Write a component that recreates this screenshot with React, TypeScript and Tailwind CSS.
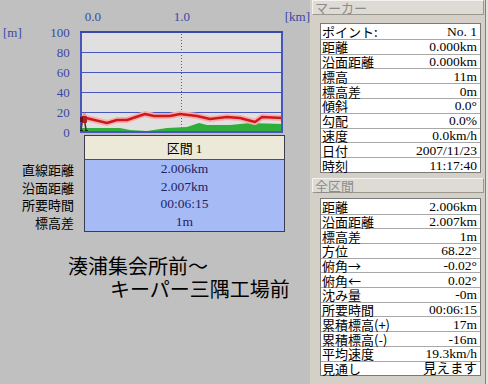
import React from "react";

const jp = "font-['Noto_Sans_CJK_JP',sans-serif]";
const serif = "font-['Liberation_Serif','Noto_Sans_CJK_JP',serif]";

const markerRows: [string, string][] = [
  ["ポイント:", "No. 1"],
  ["距離", "0.000km"],
  ["沿面距離", "0.000km"],
  ["標高", "11m"],
  ["標高差", "0m"],
  ["傾斜", "0.0°"],
  ["勾配", "0.0%"],
  ["速度", "0.0km/h"],
  ["日付", "2007/11/23"],
  ["時刻", "11:17:40"],
];

const totalRows: [string, string][] = [
  ["距離", "2.006km"],
  ["沿面距離", "2.007km"],
  ["標高差", "1m"],
  ["方位", "68.22°"],
  ["俯角→", "-0.02°"],
  ["俯角←", "0.02°"],
  ["沈み量", "-0m"],
  ["所要時間", "00:06:15"],
  ["累積標高(+)", "17m"],
  ["累積標高(-)", "-16m"],
  ["平均速度", "19.3km/h"],
  ["見通し", "見えます"],
];

const sectionRows: [string, string][] = [
  ["直線距離", "2.006km"],
  ["沿面距離", "2.007km"],
  ["所要時間", "00:06:15"],
  ["標高差", "1m"],
];

const redLine =
  "2,86 27,92 37,89 47,89 65,83 74,85 90,85 100,83 117,85 130,88 147,86 160,87 175,91 182,86 202,87";
const greenArea =
  "2,101 2,97 27,97 40,97 50,99 67,100 87,97 107,96 119,92 127,94 150,94 170,92 202,93 202,101";

const Chart = () => (
  <svg width="203" height="102" viewBox="0 0 203 102" className="block">
    <rect x="0" y="0" width="203" height="102" fill="#e0e0e0" />
    {[21, 41, 61, 81].map((y) => (
      <line key={y} x1="0" x2="203" y1={y + 0.5} y2={y + 0.5} stroke="#4656bc" strokeWidth="1" />
    ))}
    <line x1="101.5" x2="101.5" y1="0" y2="102" stroke="#4656bc" strokeWidth="1" strokeDasharray="1 2" />
    <polygon points={greenArea} fill="#2fae3a" />
    <polyline points={redLine} fill="none" stroke="#f4b0b0" strokeWidth="6" strokeLinejoin="round" />
    <polyline points={redLine} fill="none" stroke="#d01818" strokeWidth="2.4" strokeLinejoin="round" />
    <rect x="1" y="1" width="201" height="100" fill="none" stroke="#4656bc" strokeWidth="2" />
    <line x1="0" x2="203" y1="1" y2="1" stroke="#3a48a8" strokeWidth="2" />
    {/* hiker */}
    <g>
      <circle cx="4.5" cy="83.5" r="1.8" fill="#e0a070" />
      <rect x="1" y="85" width="6" height="7" rx="1" fill="#b01c28" />
      <rect x="0" y="86" width="3" height="5" fill="#701018" />
      <path d="M2 92 L1 99 M5 92 L6 99" stroke="#4a3a20" strokeWidth="1.6" />
      <path d="M0 99.5 L3 99.5 M5 99.5 L8 99.5" stroke="#202020" strokeWidth="1.2" />
    </g>
  </svg>
);

const InfoTable = ({ rows, rowH }: { rows: [string, string][]; rowH: string }) => (
  <div className="ml-[8px] w-[161px] bg-white border border-[#7a7a7a]">
    {rows.map(([k, v], i) => (
      <div
        key={k}
        className={`${rowH} flex items-center justify-between pl-[1px] pr-[3px] text-black ${
          i > 0 ? "border-t border-[#a8a8a8]" : ""
        }`}
      >
        <span className={`${jp} block text-[13px] leading-[13px]`}>{k}</span>
        <span className={`${serif} block text-[13.5px] leading-[13px]`}>{v}</span>
      </div>
    ))}
  </div>
);

const PanelHeader = ({ title }: { title: string }) => (
  <div className="h-[15px] w-[172px] bg-[#dedbd4] border-t border-l border-t-[#f4f2ee] border-l-[#f4f2ee] border-b border-r border-b-[#9a978f] border-r-[#9a978f] flex items-center pl-[2px]">
    <span className={`${jp} block text-[13px] leading-[13px] text-[#8c8c8c]`}>{title}</span>
  </div>
);

export default function App() {
  return (
    <div className="w-[488px] h-[384px] bg-[#c0c0c0] flex overflow-hidden">
      {/* left: profile */}
      <div className="w-[310px] flex flex-col">
        <div className="flex h-[133px] items-start">
          <div className={`w-[83px] pt-[23px] pr-[10px] ${serif} text-[13px] text-[#3848a8]`}>
            <div className="h-[20px] flex items-center justify-between pl-[3px]">
              <span>[m]</span>
              <span>100</span>
            </div>
            {["80", "60", "40", "20", "0"].map((t) => (
              <div key={t} className="h-[20px] flex items-center justify-end">
                {t}
              </div>
            ))}
          </div>
          <div className="flex flex-col">
            <div className={`h-[31px] flex items-start pt-[9px] ${serif} text-[13px] leading-[16px] text-[#3848a8]`}>
              <span className="ml-[5px] w-[17px]">0.0</span>
              <span className="ml-[72px] w-[17px]">1.0</span>
              <span className="ml-[94px]">[km]</span>
            </div>
            <Chart />
          </div>
        </div>

        <div className="flex mt-[2px]">
          <div className={`w-[84px] pt-[26px] pr-[10px] ${jp} text-[13px] text-black`}>
            {sectionRows.map(([k]) => (
              <div key={k} className="h-[17.5px] flex items-center justify-end">
                <span className="block leading-[13px]">{k}</span>
              </div>
            ))}
          </div>
          <div className="w-[201px] border border-[#3c3c50] bg-[#a6baf6]">
            <div className="h-[24px] bg-[#ece9d8] border-b border-[#505050] flex items-center justify-center">
              <span className={`${jp} block text-[13px] text-black leading-[13px]`}>
                区間 <span className={serif}>1</span>
              </span>
            </div>
            <div className="pb-[1px]">
              {sectionRows.map(([k, v]) => (
                <div
                  key={k}
                  className={`h-[17.5px] flex items-center justify-center ${serif} text-[13.5px] text-[#1c2468]`}
                >
                  <span className="block leading-[13px]">{v}</span>
                </div>
              ))}
            </div>
          </div>
        </div>

        <div className={`mt-[22px] ${jp} text-[20px] text-black`}>
          <div className="pl-[68px] h-[23px] flex items-center">
            <span className="block leading-[20px]">湊浦集会所前～</span>
          </div>
          <div className="pl-[110px] h-[23px] flex items-center">
            <span className="block leading-[20px]">キーパー三隅工場前</span>
          </div>
        </div>
      </div>

      {/* right: info panel */}
      <div className="w-[178px] bg-[#d4d0c8] flex">
        <div className="w-[175px] flex flex-col pl-[2px]">
          <PanelHeader title="マーカー" />
          <div className="mt-[8px]">
            <InfoTable rows={markerRows} rowH="h-[14.8px]" />
          </div>
          <div className="mt-[5px]">
            <PanelHeader title="全区間" />
          </div>
          <div className="mt-[5px]">
            <InfoTable rows={totalRows} rowH="h-[14.7px]" />
          </div>
        </div>
        <div className="w-px bg-[#808080]" />
        <div className="flex-1 bg-[#e4e2dc]" />
      </div>
    </div>
  );
}
